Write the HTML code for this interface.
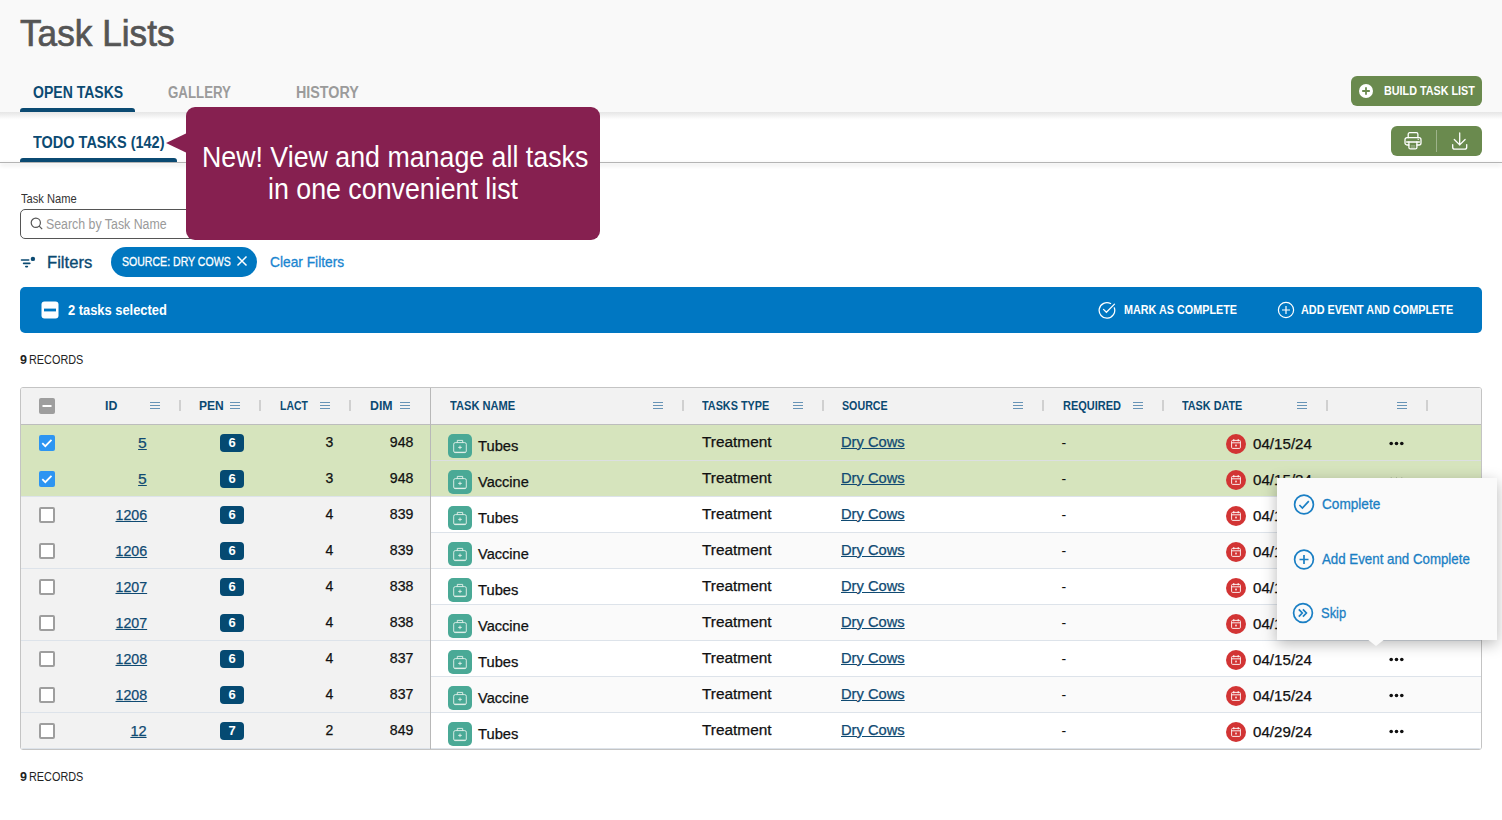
<!DOCTYPE html>
<html><head><meta charset="utf-8"><title>Task Lists</title>
<style>
html,body{margin:0;padding:0;}
body{width:1502px;height:820px;position:relative;overflow:hidden;background:#fff;font-family:"Liberation Sans",sans-serif;}
.t{position:absolute;white-space:nowrap;line-height:1;z-index:3;}
.a{position:absolute;}
#hdr{position:absolute;left:0;top:0;width:1502px;height:112px;background:#f9f9f9;}
#bar2{position:absolute;left:0;top:112px;width:1502px;height:50px;background:linear-gradient(#e6e6e6 0px,#efefef 3px,#fafafa 6px,#fff 8px);}
#bar2sh{position:absolute;left:0;top:162px;width:1502px;height:1px;background:#b4b4b4;box-shadow:0 2px 4px rgba(0,0,0,.22);}
.uline{position:absolute;height:4px;background:#0b4a72;border-radius:3px 3px 0 0;}
.gbtn{position:absolute;background:#6a8a4e;border-radius:6px;}
#tip{position:absolute;left:186px;top:107px;width:414px;height:133px;background:#862050;border-radius:9px;z-index:10;}
#tiparrow{position:absolute;left:166px;top:133px;width:0;height:0;border-top:10px solid transparent;border-bottom:10px solid transparent;border-right:21px solid #862050;z-index:10;}
#tiptext{position:absolute;left:186px;top:141px;width:414px;text-align:center;color:#fff;font-size:29px;line-height:32px;z-index:11;transform:scaleX(0.923);transform-origin:207px 0;white-space:nowrap;}
#search{position:absolute;left:20px;top:209px;width:400px;height:28px;border:1px solid #555;border-radius:5px;background:#fff;}
#chip{position:absolute;left:111px;top:247px;width:146px;height:30px;background:#0077c0;border-radius:15px;}
#banner{position:absolute;left:20px;top:287px;width:1462px;height:46px;background:#0077c2;border-radius:5px;}
#table{position:absolute;left:20px;top:387px;width:1460px;height:361px;border:1px solid #c4c4c4;border-radius:3px;background:#fff;overflow:hidden;}
#thead{position:absolute;left:0;top:0;width:1460px;height:36px;background:#f2f2f2;border-bottom:1px solid #bdbdbd;}
.row{position:absolute;left:0;width:1460px;height:36px;}
.pin{position:absolute;left:0;width:410px;height:36px;background:#f2f2f2;}
.rb{position:absolute;left:0;width:1460px;height:1px;background:#dde3ea;}
.cb{position:absolute;left:19px;width:12px;height:12px;border:2px solid #9e9e9e;border-radius:2px;background:#fff;}
.cbc{position:absolute;left:19px;width:16px;height:16px;border-radius:2px;background:#2d95f2;}
.pen{position:absolute;left:199px;width:24px;height:18px;background:#054a72;border-radius:4px;}
.ticon{position:absolute;left:428px;width:24px;height:24px;background:#4aa996;border-radius:5px;}
.cal{position:absolute;left:1206px;width:20px;height:20px;background:#d23434;border-radius:50%;}
.dots{position:absolute;left:1370px;width:14px;height:4px;}
.menu{position:absolute;width:10px;height:7px;}
.sep{position:absolute;width:2px;height:11px;background:#d0d0d0;top:12px;}
#popup{position:absolute;left:1277px;top:478px;width:220px;height:162px;background:#fafafa;box-shadow:0 4px 14px rgba(0,0,0,.28);z-index:8;}
#popupArrow{position:absolute;left:1367px;top:639px;width:0;height:0;border-left:9px solid transparent;border-right:9px solid transparent;border-top:7px solid #fafafa;z-index:8;}
.popi{position:absolute;z-index:9;}
#popup ~ .t{z-index:3;}

</style></head><body>
<div id="hdr"></div>
<div class="uline" style="left:20px;top:108px;width:115px;z-index:4;"></div>
<div id="bar2"></div><div id="bar2sh"></div>
<div class="uline" style="left:20px;top:158px;width:157px;z-index:4;"></div>
<div class="gbtn" style="left:1351px;top:76px;width:131px;height:30px;"></div>
<svg class="a" style="left:1358px;top:83px;z-index:4" width="16" height="16" viewBox="0 0 16 16"><circle cx="8" cy="8" r="7" fill="#fff"/><path d="M8 4.2v7.6M4.2 8h7.6" stroke="#6a8a4e" stroke-width="1.8"/></svg>
<div class="gbtn" style="left:1391px;top:126px;width:91px;height:30px;"></div>
<div class="a" style="left:1436px;top:130px;width:1px;height:22px;background:rgba(255,255,255,.35);z-index:4"></div>
<svg class="a" style="left:1403px;top:132px;z-index:4" width="20" height="19" viewBox="0 0 20 19" fill="none" stroke="#fff" stroke-width="1.3" stroke-linecap="round" stroke-linejoin="round"><path d="M5.2 5.7V2.2a1.5 1.5 0 0 1 1.5-1.5h6.7a1.5 1.5 0 0 1 1.5 1.5v3.5"/><path d="M5.9 13H4a2 2 0 0 1-2-2V7.7a2 2 0 0 1 2-2h12a2 2 0 0 1 2 2V11a2 2 0 0 1-2 2h-2.1"/><path d="M3.6 10h12.8"/><path d="M5.9 10v5.4a1.5 1.5 0 0 0 1.5 1.5h5a1.5 1.5 0 0 0 1.5-1.5V10"/><path d="M8.2 13.8h3.6M8.2 15.2h3.6" stroke-width=".6" opacity=".6"/><circle cx="15.2" cy="7.4" r=".55" fill="#fff" stroke="none"/></svg>
<svg class="a" style="left:1451px;top:132px;z-index:4" width="18" height="19" viewBox="0 0 18 19" fill="none" stroke="#fff" stroke-width="1.3" stroke-linecap="round" stroke-linejoin="round"><path d="M8.7 1v12M3.3 7.5l5.4 5.4 5.4-5.4"/><path d="M1.7 12.6v2.6a2 2 0 0 0 2 2h10a2 2 0 0 0 2-2v-2.6"/></svg>
<div id="tip"></div><div id="tiparrow"></div>
<div id="tiptext">New! View and manage all tasks<br>in one convenient list</div>
<div id="search"></div>
<svg class="a" style="left:30px;top:217px;z-index:4" width="13" height="13" viewBox="0 0 13 13" fill="none" stroke="#555" stroke-width="1.2"><circle cx="5.8" cy="5.8" r="4.6"/><path d="M9.2 9.2l3 3"/></svg>
<svg class="a" style="left:20px;top:255px;z-index:4" width="16" height="14" viewBox="0 0 16 14" fill="none" stroke="#0b4a72" stroke-width="1.6" stroke-linecap="round"><path d="M1.5 5h7.2M3.6 8.4h6.2M5.8 11.6h1.6"/><circle cx="12.9" cy="3.9" r="2.2" fill="#0b4a72" stroke="none"/></svg>
<div id="chip"></div>
<svg class="a" style="left:236px;top:255px;z-index:4" width="12" height="12" viewBox="0 0 12 12" stroke="#fff" stroke-width="1.5"><path d="M1.5 1.5l9 9M10.5 1.5l-9 9"/></svg>
<div id="banner"></div>
<svg class="a" style="left:41px;top:301px;z-index:4" width="18" height="18" viewBox="0 0 18 18"><rect x="0.5" y="0.5" width="17" height="17" rx="3" fill="#fff"/><rect x="3" y="7.6" width="12" height="2.8" fill="#0077c2"/></svg>
<svg class="a" style="left:1098px;top:301px;z-index:4" width="19" height="18" viewBox="0 0 19 18" fill="none" stroke="#fff" stroke-width="1.25" stroke-linecap="round"><path d="M12.6 2.5A7.8 7.8 0 1 0 16.3 6.8"/><path d="M5.5 8.4l2.9 2.9 8.1-8.2"/></svg>
<svg class="a" style="left:1277px;top:301px;z-index:4" width="18" height="18" viewBox="0 0 18 18" fill="none" stroke="#fff" stroke-width="1.2"><circle cx="9" cy="9" r="7.6"/><path d="M9 5v8M5 9h8"/></svg>
<div id="table">
<div id="thead"></div>
<svg class="a" style="left:18px;top:10px" width="16" height="16" viewBox="0 0 16 16"><rect width="16" height="16" rx="2" fill="#9e9e9e"/><rect x="3.5" y="7" width="9" height="2" fill="#fff"/></svg>
<svg class="menu" style="left:129px;top:14px" width="10" height="7" viewBox="0 0 10 7" stroke="#6794b6" stroke-width="1"><path d="M0 .5h10M0 3.5h10M0 6.5h10"/></svg>
<svg class="menu" style="left:209px;top:14px" width="10" height="7" viewBox="0 0 10 7" stroke="#6794b6" stroke-width="1"><path d="M0 .5h10M0 3.5h10M0 6.5h10"/></svg>
<svg class="menu" style="left:299px;top:14px" width="10" height="7" viewBox="0 0 10 7" stroke="#6794b6" stroke-width="1"><path d="M0 .5h10M0 3.5h10M0 6.5h10"/></svg>
<svg class="menu" style="left:379px;top:14px" width="10" height="7" viewBox="0 0 10 7" stroke="#6794b6" stroke-width="1"><path d="M0 .5h10M0 3.5h10M0 6.5h10"/></svg>
<svg class="menu" style="left:632px;top:14px" width="10" height="7" viewBox="0 0 10 7" stroke="#6794b6" stroke-width="1"><path d="M0 .5h10M0 3.5h10M0 6.5h10"/></svg>
<svg class="menu" style="left:772px;top:14px" width="10" height="7" viewBox="0 0 10 7" stroke="#6794b6" stroke-width="1"><path d="M0 .5h10M0 3.5h10M0 6.5h10"/></svg>
<svg class="menu" style="left:992px;top:14px" width="10" height="7" viewBox="0 0 10 7" stroke="#6794b6" stroke-width="1"><path d="M0 .5h10M0 3.5h10M0 6.5h10"/></svg>
<svg class="menu" style="left:1112px;top:14px" width="10" height="7" viewBox="0 0 10 7" stroke="#6794b6" stroke-width="1"><path d="M0 .5h10M0 3.5h10M0 6.5h10"/></svg>
<svg class="menu" style="left:1276px;top:14px" width="10" height="7" viewBox="0 0 10 7" stroke="#6794b6" stroke-width="1"><path d="M0 .5h10M0 3.5h10M0 6.5h10"/></svg>
<svg class="menu" style="left:1376px;top:14px" width="10" height="7" viewBox="0 0 10 7" stroke="#6794b6" stroke-width="1"><path d="M0 .5h10M0 3.5h10M0 6.5h10"/></svg>
<div class="sep" style="left:158px"></div>
<div class="sep" style="left:238px"></div>
<div class="sep" style="left:328px"></div>
<div class="sep" style="left:661px"></div>
<div class="sep" style="left:801px"></div>
<div class="sep" style="left:1021px"></div>
<div class="sep" style="left:1141px"></div>
<div class="sep" style="left:1305px"></div>
<div class="sep" style="left:1405px"></div>
<div class="a" style="left:409px;top:0;width:1px;height:361px;background:#b8b8b8;z-index:2"></div>
<div class="row" style="top:37px;background:#d6e4bd"></div>
<svg class="a" style="left:18px;top:47px" width="16" height="16" viewBox="0 0 16 16"><rect width="16" height="16" rx="2" fill="#2d95f2"/><path d="M3.3 8.2l3 3 6.2-6.4" fill="none" stroke="#fff" stroke-width="1.8"/></svg>
<div class="pen" style="top:46px"></div>
<svg class="a" style="left:427px;top:46px" width="24" height="24" viewBox="0 0 24 24"><rect width="24" height="24" rx="5" fill="#4aa996"/><g fill="none" stroke="#e6f2ec" stroke-width="0.9"><rect x="5.7" y="8.6" width="12.6" height="10" rx="1.6"/><path d="M9.3 8.6V6.4h5.4v2.2"/><path d="M12 11.6v3.6M10.2 13.4h3.6"/><path d="M6.6 18.2h10.8" stroke-width="1.1"/></g></svg>
<svg class="a" style="left:1205px;top:46px" width="20" height="20" viewBox="0 0 20 20"><circle cx="10" cy="10" r="10" fill="#d23434"/><g fill="none" stroke="#fff" stroke-width="0.9"><rect x="5.6" y="6.4" width="8.8" height="8" rx="1"/><path d="M5.6 8.8h8.8M7.8 5v2.4M12.2 5v2.4"/></g><rect x="9.3" y="10.6" width="1.4" height="1.8" fill="#fff"/></svg>
<svg class="a" style="left:1368px;top:53px" width="15" height="5" viewBox="0 0 15 5" fill="#111"><circle cx="2.2" cy="2.5" r="1.8"/><circle cx="7.5" cy="2.5" r="1.8"/><circle cx="12.8" cy="2.5" r="1.8"/></svg>
<div class="row" style="top:73px;background:#d6e4bd"></div>
<div class="rb" style="top:72px;left:410px;width:1050px;background:#dcdfe2"></div>
<svg class="a" style="left:18px;top:83px" width="16" height="16" viewBox="0 0 16 16"><rect width="16" height="16" rx="2" fill="#2d95f2"/><path d="M3.3 8.2l3 3 6.2-6.4" fill="none" stroke="#fff" stroke-width="1.8"/></svg>
<div class="pen" style="top:82px"></div>
<svg class="a" style="left:427px;top:82px" width="24" height="24" viewBox="0 0 24 24"><rect width="24" height="24" rx="5" fill="#4aa996"/><g fill="none" stroke="#e6f2ec" stroke-width="0.9"><rect x="5.7" y="8.6" width="12.6" height="10" rx="1.6"/><path d="M9.3 8.6V6.4h5.4v2.2"/><path d="M12 11.6v3.6M10.2 13.4h3.6"/><path d="M6.6 18.2h10.8" stroke-width="1.1"/></g></svg>
<svg class="a" style="left:1205px;top:82px" width="20" height="20" viewBox="0 0 20 20"><circle cx="10" cy="10" r="10" fill="#d23434"/><g fill="none" stroke="#fff" stroke-width="0.9"><rect x="5.6" y="6.4" width="8.8" height="8" rx="1"/><path d="M5.6 8.8h8.8M7.8 5v2.4M12.2 5v2.4"/></g><rect x="9.3" y="10.6" width="1.4" height="1.8" fill="#fff"/></svg>
<svg class="a" style="left:1368px;top:89px" width="15" height="5" viewBox="0 0 15 5" fill="#111"><circle cx="2.2" cy="2.5" r="1.8"/><circle cx="7.5" cy="2.5" r="1.8"/><circle cx="12.8" cy="2.5" r="1.8"/></svg>
<div class="row" style="top:109px;background:#ffffff"></div>
<div class="pin" style="top:109px"></div>
<div class="rb" style="top:108px;left:410px;width:1050px;background:#dde3ea"></div>
<div class="rb" style="top:108px;width:410px;"></div>
<div class="cb" style="left:18px;top:119px"></div>
<div class="pen" style="top:118px"></div>
<svg class="a" style="left:427px;top:118px" width="24" height="24" viewBox="0 0 24 24"><rect width="24" height="24" rx="5" fill="#4aa996"/><g fill="none" stroke="#e6f2ec" stroke-width="0.9"><rect x="5.7" y="8.6" width="12.6" height="10" rx="1.6"/><path d="M9.3 8.6V6.4h5.4v2.2"/><path d="M12 11.6v3.6M10.2 13.4h3.6"/><path d="M6.6 18.2h10.8" stroke-width="1.1"/></g></svg>
<svg class="a" style="left:1205px;top:118px" width="20" height="20" viewBox="0 0 20 20"><circle cx="10" cy="10" r="10" fill="#d23434"/><g fill="none" stroke="#fff" stroke-width="0.9"><rect x="5.6" y="6.4" width="8.8" height="8" rx="1"/><path d="M5.6 8.8h8.8M7.8 5v2.4M12.2 5v2.4"/></g><rect x="9.3" y="10.6" width="1.4" height="1.8" fill="#fff"/></svg>
<svg class="a" style="left:1368px;top:125px" width="15" height="5" viewBox="0 0 15 5" fill="#111"><circle cx="2.2" cy="2.5" r="1.8"/><circle cx="7.5" cy="2.5" r="1.8"/><circle cx="12.8" cy="2.5" r="1.8"/></svg>
<div class="row" style="top:145px;background:#fafafa"></div>
<div class="pin" style="top:145px"></div>
<div class="rb" style="top:144px;left:410px;width:1050px;background:#dde3ea"></div>
<div class="cb" style="left:18px;top:155px"></div>
<div class="pen" style="top:154px"></div>
<svg class="a" style="left:427px;top:154px" width="24" height="24" viewBox="0 0 24 24"><rect width="24" height="24" rx="5" fill="#4aa996"/><g fill="none" stroke="#e6f2ec" stroke-width="0.9"><rect x="5.7" y="8.6" width="12.6" height="10" rx="1.6"/><path d="M9.3 8.6V6.4h5.4v2.2"/><path d="M12 11.6v3.6M10.2 13.4h3.6"/><path d="M6.6 18.2h10.8" stroke-width="1.1"/></g></svg>
<svg class="a" style="left:1205px;top:154px" width="20" height="20" viewBox="0 0 20 20"><circle cx="10" cy="10" r="10" fill="#d23434"/><g fill="none" stroke="#fff" stroke-width="0.9"><rect x="5.6" y="6.4" width="8.8" height="8" rx="1"/><path d="M5.6 8.8h8.8M7.8 5v2.4M12.2 5v2.4"/></g><rect x="9.3" y="10.6" width="1.4" height="1.8" fill="#fff"/></svg>
<svg class="a" style="left:1368px;top:161px" width="15" height="5" viewBox="0 0 15 5" fill="#111"><circle cx="2.2" cy="2.5" r="1.8"/><circle cx="7.5" cy="2.5" r="1.8"/><circle cx="12.8" cy="2.5" r="1.8"/></svg>
<div class="row" style="top:181px;background:#ffffff"></div>
<div class="pin" style="top:181px"></div>
<div class="rb" style="top:180px;left:410px;width:1050px;background:#dde3ea"></div>
<div class="rb" style="top:180px;width:410px;"></div>
<div class="cb" style="left:18px;top:191px"></div>
<div class="pen" style="top:190px"></div>
<svg class="a" style="left:427px;top:190px" width="24" height="24" viewBox="0 0 24 24"><rect width="24" height="24" rx="5" fill="#4aa996"/><g fill="none" stroke="#e6f2ec" stroke-width="0.9"><rect x="5.7" y="8.6" width="12.6" height="10" rx="1.6"/><path d="M9.3 8.6V6.4h5.4v2.2"/><path d="M12 11.6v3.6M10.2 13.4h3.6"/><path d="M6.6 18.2h10.8" stroke-width="1.1"/></g></svg>
<svg class="a" style="left:1205px;top:190px" width="20" height="20" viewBox="0 0 20 20"><circle cx="10" cy="10" r="10" fill="#d23434"/><g fill="none" stroke="#fff" stroke-width="0.9"><rect x="5.6" y="6.4" width="8.8" height="8" rx="1"/><path d="M5.6 8.8h8.8M7.8 5v2.4M12.2 5v2.4"/></g><rect x="9.3" y="10.6" width="1.4" height="1.8" fill="#fff"/></svg>
<svg class="a" style="left:1368px;top:197px" width="15" height="5" viewBox="0 0 15 5" fill="#111"><circle cx="2.2" cy="2.5" r="1.8"/><circle cx="7.5" cy="2.5" r="1.8"/><circle cx="12.8" cy="2.5" r="1.8"/></svg>
<div class="row" style="top:217px;background:#fafafa"></div>
<div class="pin" style="top:217px"></div>
<div class="rb" style="top:216px;left:410px;width:1050px;background:#dde3ea"></div>
<div class="cb" style="left:18px;top:227px"></div>
<div class="pen" style="top:226px"></div>
<svg class="a" style="left:427px;top:226px" width="24" height="24" viewBox="0 0 24 24"><rect width="24" height="24" rx="5" fill="#4aa996"/><g fill="none" stroke="#e6f2ec" stroke-width="0.9"><rect x="5.7" y="8.6" width="12.6" height="10" rx="1.6"/><path d="M9.3 8.6V6.4h5.4v2.2"/><path d="M12 11.6v3.6M10.2 13.4h3.6"/><path d="M6.6 18.2h10.8" stroke-width="1.1"/></g></svg>
<svg class="a" style="left:1205px;top:226px" width="20" height="20" viewBox="0 0 20 20"><circle cx="10" cy="10" r="10" fill="#d23434"/><g fill="none" stroke="#fff" stroke-width="0.9"><rect x="5.6" y="6.4" width="8.8" height="8" rx="1"/><path d="M5.6 8.8h8.8M7.8 5v2.4M12.2 5v2.4"/></g><rect x="9.3" y="10.6" width="1.4" height="1.8" fill="#fff"/></svg>
<svg class="a" style="left:1368px;top:233px" width="15" height="5" viewBox="0 0 15 5" fill="#111"><circle cx="2.2" cy="2.5" r="1.8"/><circle cx="7.5" cy="2.5" r="1.8"/><circle cx="12.8" cy="2.5" r="1.8"/></svg>
<div class="row" style="top:253px;background:#ffffff"></div>
<div class="pin" style="top:253px"></div>
<div class="rb" style="top:252px;left:410px;width:1050px;background:#dde3ea"></div>
<div class="rb" style="top:252px;width:410px;"></div>
<div class="cb" style="left:18px;top:263px"></div>
<div class="pen" style="top:262px"></div>
<svg class="a" style="left:427px;top:262px" width="24" height="24" viewBox="0 0 24 24"><rect width="24" height="24" rx="5" fill="#4aa996"/><g fill="none" stroke="#e6f2ec" stroke-width="0.9"><rect x="5.7" y="8.6" width="12.6" height="10" rx="1.6"/><path d="M9.3 8.6V6.4h5.4v2.2"/><path d="M12 11.6v3.6M10.2 13.4h3.6"/><path d="M6.6 18.2h10.8" stroke-width="1.1"/></g></svg>
<svg class="a" style="left:1205px;top:262px" width="20" height="20" viewBox="0 0 20 20"><circle cx="10" cy="10" r="10" fill="#d23434"/><g fill="none" stroke="#fff" stroke-width="0.9"><rect x="5.6" y="6.4" width="8.8" height="8" rx="1"/><path d="M5.6 8.8h8.8M7.8 5v2.4M12.2 5v2.4"/></g><rect x="9.3" y="10.6" width="1.4" height="1.8" fill="#fff"/></svg>
<svg class="a" style="left:1368px;top:269px" width="15" height="5" viewBox="0 0 15 5" fill="#111"><circle cx="2.2" cy="2.5" r="1.8"/><circle cx="7.5" cy="2.5" r="1.8"/><circle cx="12.8" cy="2.5" r="1.8"/></svg>
<div class="row" style="top:289px;background:#fafafa"></div>
<div class="pin" style="top:289px"></div>
<div class="rb" style="top:288px;left:410px;width:1050px;background:#dde3ea"></div>
<div class="cb" style="left:18px;top:299px"></div>
<div class="pen" style="top:298px"></div>
<svg class="a" style="left:427px;top:298px" width="24" height="24" viewBox="0 0 24 24"><rect width="24" height="24" rx="5" fill="#4aa996"/><g fill="none" stroke="#e6f2ec" stroke-width="0.9"><rect x="5.7" y="8.6" width="12.6" height="10" rx="1.6"/><path d="M9.3 8.6V6.4h5.4v2.2"/><path d="M12 11.6v3.6M10.2 13.4h3.6"/><path d="M6.6 18.2h10.8" stroke-width="1.1"/></g></svg>
<svg class="a" style="left:1205px;top:298px" width="20" height="20" viewBox="0 0 20 20"><circle cx="10" cy="10" r="10" fill="#d23434"/><g fill="none" stroke="#fff" stroke-width="0.9"><rect x="5.6" y="6.4" width="8.8" height="8" rx="1"/><path d="M5.6 8.8h8.8M7.8 5v2.4M12.2 5v2.4"/></g><rect x="9.3" y="10.6" width="1.4" height="1.8" fill="#fff"/></svg>
<svg class="a" style="left:1368px;top:305px" width="15" height="5" viewBox="0 0 15 5" fill="#111"><circle cx="2.2" cy="2.5" r="1.8"/><circle cx="7.5" cy="2.5" r="1.8"/><circle cx="12.8" cy="2.5" r="1.8"/></svg>
<div class="row" style="top:325px;background:#ffffff"></div>
<div class="pin" style="top:325px"></div>
<div class="rb" style="top:324px;left:410px;width:1050px;background:#dde3ea"></div>
<div class="rb" style="top:324px;width:410px;"></div>
<div class="cb" style="left:18px;top:335px"></div>
<div class="pen" style="top:334px"></div>
<svg class="a" style="left:427px;top:334px" width="24" height="24" viewBox="0 0 24 24"><rect width="24" height="24" rx="5" fill="#4aa996"/><g fill="none" stroke="#e6f2ec" stroke-width="0.9"><rect x="5.7" y="8.6" width="12.6" height="10" rx="1.6"/><path d="M9.3 8.6V6.4h5.4v2.2"/><path d="M12 11.6v3.6M10.2 13.4h3.6"/><path d="M6.6 18.2h10.8" stroke-width="1.1"/></g></svg>
<svg class="a" style="left:1205px;top:334px" width="20" height="20" viewBox="0 0 20 20"><circle cx="10" cy="10" r="10" fill="#d23434"/><g fill="none" stroke="#fff" stroke-width="0.9"><rect x="5.6" y="6.4" width="8.8" height="8" rx="1"/><path d="M5.6 8.8h8.8M7.8 5v2.4M12.2 5v2.4"/></g><rect x="9.3" y="10.6" width="1.4" height="1.8" fill="#fff"/></svg>
<svg class="a" style="left:1368px;top:341px" width="15" height="5" viewBox="0 0 15 5" fill="#111"><circle cx="2.2" cy="2.5" r="1.8"/><circle cx="7.5" cy="2.5" r="1.8"/><circle cx="12.8" cy="2.5" r="1.8"/></svg>
<div class="rb" style="top:360px;left:0;width:1460px;"></div>
</div>
<div id="popup"></div><div id="popupArrow"></div>
<svg class="popi" style="left:1293px;top:494px" width="22" height="22" viewBox="0 0 22 22" fill="none" stroke="#1a7fc4" stroke-width="1.7"><circle cx="11" cy="10.5" r="9.4"/><path d="M6.4 11l3 3 6.4-6.8"/></svg>
<svg class="popi" style="left:1293px;top:549px" width="22" height="22" viewBox="0 0 22 22" fill="none" stroke="#1a7fc4" stroke-width="1.7"><circle cx="11" cy="10.5" r="9.4"/><path d="M11 6v9M6.5 10.5h9"/></svg>
<svg class="popi" style="left:1292px;top:602px" width="22" height="22" viewBox="0 0 22 22" fill="none" stroke="#1a7fc4" stroke-width="1.7"><circle cx="11" cy="11" r="9.4"/><path d="M6.8 7.3l3.5 3.7-3.5 3.7M10.9 7.3l3.5 3.7-3.5 3.7"/></svg>
<span id="t0" class="t" style="left:20px;top:16.32px;font-size:36px;font-weight:400;color:#555555;transform:scaleX(0.9777);transform-origin:left;-webkit-text-stroke:0.7px #555;">Task Lists</span>
<span id="t1" class="t" style="left:33px;top:85.39px;font-size:15.6px;font-weight:700;color:#0b4a72;transform:scaleX(0.9000);transform-origin:left;">OPEN TASKS</span>
<span id="t2" class="t" style="left:168px;top:85.39px;font-size:15.6px;font-weight:700;color:#9b9b9b;transform:scaleX(0.8514);transform-origin:left;">GALLERY</span>
<span id="t3" class="t" style="left:296px;top:85.39px;font-size:15.6px;font-weight:700;color:#9b9b9b;transform:scaleX(0.9179);transform-origin:left;">HISTORY</span>
<span id="t4" class="t" style="left:1384.4px;top:85.12px;font-size:12.5px;font-weight:700;color:#ffffff;transform:scaleX(0.8629);transform-origin:left;">BUILD TASK LIST</span>
<span id="t5" class="t" style="left:33px;top:135.39px;font-size:15.6px;font-weight:700;color:#0b4a72;transform:scaleX(0.9291);transform-origin:left;">TODO TASKS (142)</span>
<span id="t6" class="t" style="left:21px;top:191.69px;font-size:13px;font-weight:400;color:#333333;transform:scaleX(0.8554);transform-origin:left;">Task Name</span>
<span id="t7" class="t" style="left:46px;top:216.65px;font-size:14px;font-weight:400;color:#9a9a9a;transform:scaleX(0.8824);transform-origin:left;">Search by Task Name</span>
<span id="t8" class="t" style="left:47.2px;top:253.61px;font-size:17px;font-weight:400;color:#0b4a72;transform:scaleX(0.9778);transform-origin:left;-webkit-text-stroke:0.35px #0b4a72;">Filters</span>
<span id="t9" class="t" style="left:122px;top:255.49px;font-size:13px;font-weight:400;color:#ffffff;transform:scaleX(0.8120);transform-origin:left;-webkit-text-stroke:0.3px #fff;">SOURCE: DRY COWS</span>
<span id="t10" class="t" style="left:270px;top:254.72px;font-size:14.5px;font-weight:400;color:#1a85d0;transform:scaleX(0.9487);transform-origin:left;-webkit-text-stroke:0.3px #1a85d0;">Clear Filters</span>
<span id="t11" class="t" style="left:68px;top:302.52px;font-size:14.5px;font-weight:700;color:#ffffff;transform:scaleX(0.8883);transform-origin:left;">2 tasks selected</span>
<span id="t12" class="t" style="left:1123.6px;top:302.99px;font-size:13px;font-weight:700;color:#ffffff;transform:scaleX(0.8309);transform-origin:left;">MARK AS COMPLETE</span>
<span id="t13" class="t" style="left:1301.3px;top:302.99px;font-size:13px;font-weight:700;color:#ffffff;transform:scaleX(0.8352);transform-origin:left;">ADD EVENT AND COMPLETE</span>
<span id="t14" class="t" style="left:20px;top:354.22px;font-size:12.5px;font-weight:700;color:#222222;">9</span>
<span id="t15" class="t" style="left:29px;top:354.22px;font-size:12.5px;font-weight:400;color:#222222;transform:scaleX(0.8689);transform-origin:left;">RECORDS</span>
<span id="t16" class="t" style="left:20px;top:771.42px;font-size:12.5px;font-weight:700;color:#222222;">9</span>
<span id="t17" class="t" style="left:29px;top:771.42px;font-size:12.5px;font-weight:400;color:#222222;transform:scaleX(0.8689);transform-origin:left;">RECORDS</span>
<span id="t18" class="t" style="left:104.6px;top:398.99px;font-size:13px;font-weight:700;color:#0b4a72;transform:scaleX(0.9500);transform-origin:left;">ID</span>
<span id="t19" class="t" style="left:199.2px;top:398.99px;font-size:13px;font-weight:700;color:#0b4a72;transform:scaleX(0.9240);transform-origin:left;">PEN</span>
<span id="t20" class="t" style="left:279.6px;top:398.99px;font-size:13px;font-weight:700;color:#0b4a72;transform:scaleX(0.8029);transform-origin:left;">LACT</span>
<span id="t21" class="t" style="left:369.5px;top:398.99px;font-size:13px;font-weight:700;color:#0b4a72;transform:scaleX(0.9478);transform-origin:left;">DIM</span>
<span id="t22" class="t" style="left:449.7px;top:398.99px;font-size:13px;font-weight:700;color:#0b4a72;transform:scaleX(0.8553);transform-origin:left;">TASK NAME</span>
<span id="t23" class="t" style="left:702.3px;top:398.99px;font-size:13px;font-weight:700;color:#0b4a72;transform:scaleX(0.8333);transform-origin:left;">TASKS TYPE</span>
<span id="t24" class="t" style="left:842px;top:398.99px;font-size:13px;font-weight:700;color:#0b4a72;transform:scaleX(0.8214);transform-origin:left;">SOURCE</span>
<span id="t25" class="t" style="left:1062.5px;top:398.99px;font-size:13px;font-weight:700;color:#0b4a72;transform:scaleX(0.8456);transform-origin:left;">REQUIRED</span>
<span id="t26" class="t" style="left:1182.3px;top:398.99px;font-size:13px;font-weight:700;color:#0b4a72;transform:scaleX(0.8315);transform-origin:left;">TASK DATE</span>
<span id="t27" class="t" style="right:1355px;top:435.65px;font-size:14px;font-weight:400;color:#104a72;transform:scaleX(1.1143);transform-origin:right;text-decoration:underline;text-underline-offset:1px;-webkit-text-stroke:0.25px currentColor;">5</span>
<span id="t28" class="t" style="left:32px;width:400px;text-align:center;top:436.49px;font-size:13px;font-weight:700;color:#ffffff;">6</span>
<span id="t29" class="t" style="right:1168.6px;top:434.85px;font-size:14px;font-weight:400;color:#111111;-webkit-text-stroke:0.25px currentColor;">3</span>
<span id="t30" class="t" style="right:1088.7px;top:434.85px;font-size:14px;font-weight:400;color:#111111;transform:scaleX(1.0087);transform-origin:right;-webkit-text-stroke:0.25px currentColor;">948</span>
<span id="t31" class="t" style="left:478px;top:439.05px;font-size:14px;font-weight:400;color:#111111;transform:scaleX(1.0526);transform-origin:left;-webkit-text-stroke:0.25px currentColor;">Tubes</span>
<span id="t32" class="t" style="left:701.5px;top:434.65px;font-size:14px;font-weight:400;color:#111111;transform:scaleX(1.0984);transform-origin:left;-webkit-text-stroke:0.25px currentColor;">Treatment</span>
<span id="t33" class="t" style="left:841px;top:434.65px;font-size:14px;font-weight:400;color:#104a72;transform:scaleX(1.0500);transform-origin:left;text-decoration:underline;text-underline-offset:1px;-webkit-text-stroke:0.25px currentColor;">Dry Cows</span>
<span id="t34" class="t" style="left:1061.5px;top:435.65px;font-size:14px;font-weight:400;color:#111111;">-</span>
<span id="t35" class="t" style="left:1252.6px;top:437.15px;font-size:14px;font-weight:400;color:#111111;transform:scaleX(1.0815);transform-origin:left;-webkit-text-stroke:0.25px currentColor;">04/15/24</span>
<span id="t36" class="t" style="right:1355px;top:471.65px;font-size:14px;font-weight:400;color:#104a72;transform:scaleX(1.1143);transform-origin:right;text-decoration:underline;text-underline-offset:1px;-webkit-text-stroke:0.25px currentColor;">5</span>
<span id="t37" class="t" style="left:32px;width:400px;text-align:center;top:472.49px;font-size:13px;font-weight:700;color:#ffffff;">6</span>
<span id="t38" class="t" style="right:1168.6px;top:470.85px;font-size:14px;font-weight:400;color:#111111;-webkit-text-stroke:0.25px currentColor;">3</span>
<span id="t39" class="t" style="right:1088.7px;top:470.85px;font-size:14px;font-weight:400;color:#111111;transform:scaleX(1.0087);transform-origin:right;-webkit-text-stroke:0.25px currentColor;">948</span>
<span id="t40" class="t" style="left:478px;top:475.05px;font-size:14px;font-weight:400;color:#111111;transform:scaleX(1.0408);transform-origin:left;-webkit-text-stroke:0.25px currentColor;">Vaccine</span>
<span id="t41" class="t" style="left:701.5px;top:470.65px;font-size:14px;font-weight:400;color:#111111;transform:scaleX(1.0984);transform-origin:left;-webkit-text-stroke:0.25px currentColor;">Treatment</span>
<span id="t42" class="t" style="left:841px;top:470.65px;font-size:14px;font-weight:400;color:#104a72;transform:scaleX(1.0500);transform-origin:left;text-decoration:underline;text-underline-offset:1px;-webkit-text-stroke:0.25px currentColor;">Dry Cows</span>
<span id="t43" class="t" style="left:1061.5px;top:471.65px;font-size:14px;font-weight:400;color:#111111;">-</span>
<span id="t44" class="t" style="left:1252.6px;top:473.15px;font-size:14px;font-weight:400;color:#111111;transform:scaleX(1.0815);transform-origin:left;-webkit-text-stroke:0.25px currentColor;">04/15/24</span>
<span id="t45" class="t" style="right:1355px;top:507.65px;font-size:14px;font-weight:400;color:#104a72;transform:scaleX(1.0161);transform-origin:right;text-decoration:underline;text-underline-offset:1px;-webkit-text-stroke:0.25px currentColor;">1206</span>
<span id="t46" class="t" style="left:32px;width:400px;text-align:center;top:508.49px;font-size:13px;font-weight:700;color:#ffffff;">6</span>
<span id="t47" class="t" style="right:1168.6px;top:506.85px;font-size:14px;font-weight:400;color:#111111;-webkit-text-stroke:0.25px currentColor;">4</span>
<span id="t48" class="t" style="right:1088.7px;top:506.85px;font-size:14px;font-weight:400;color:#111111;transform:scaleX(1.0087);transform-origin:right;-webkit-text-stroke:0.25px currentColor;">839</span>
<span id="t49" class="t" style="left:478px;top:511.05px;font-size:14px;font-weight:400;color:#111111;transform:scaleX(1.0526);transform-origin:left;-webkit-text-stroke:0.25px currentColor;">Tubes</span>
<span id="t50" class="t" style="left:701.5px;top:506.65px;font-size:14px;font-weight:400;color:#111111;transform:scaleX(1.0984);transform-origin:left;-webkit-text-stroke:0.25px currentColor;">Treatment</span>
<span id="t51" class="t" style="left:841px;top:506.65px;font-size:14px;font-weight:400;color:#104a72;transform:scaleX(1.0500);transform-origin:left;text-decoration:underline;text-underline-offset:1px;-webkit-text-stroke:0.25px currentColor;">Dry Cows</span>
<span id="t52" class="t" style="left:1061.5px;top:507.65px;font-size:14px;font-weight:400;color:#111111;">-</span>
<span id="t53" class="t" style="left:1252.6px;top:509.15px;font-size:14px;font-weight:400;color:#111111;transform:scaleX(1.0815);transform-origin:left;-webkit-text-stroke:0.25px currentColor;">04/15/24</span>
<span id="t54" class="t" style="right:1355px;top:543.65px;font-size:14px;font-weight:400;color:#104a72;transform:scaleX(1.0161);transform-origin:right;text-decoration:underline;text-underline-offset:1px;-webkit-text-stroke:0.25px currentColor;">1206</span>
<span id="t55" class="t" style="left:32px;width:400px;text-align:center;top:544.49px;font-size:13px;font-weight:700;color:#ffffff;">6</span>
<span id="t56" class="t" style="right:1168.6px;top:542.85px;font-size:14px;font-weight:400;color:#111111;-webkit-text-stroke:0.25px currentColor;">4</span>
<span id="t57" class="t" style="right:1088.7px;top:542.85px;font-size:14px;font-weight:400;color:#111111;transform:scaleX(1.0087);transform-origin:right;-webkit-text-stroke:0.25px currentColor;">839</span>
<span id="t58" class="t" style="left:478px;top:547.05px;font-size:14px;font-weight:400;color:#111111;transform:scaleX(1.0408);transform-origin:left;-webkit-text-stroke:0.25px currentColor;">Vaccine</span>
<span id="t59" class="t" style="left:701.5px;top:542.65px;font-size:14px;font-weight:400;color:#111111;transform:scaleX(1.0984);transform-origin:left;-webkit-text-stroke:0.25px currentColor;">Treatment</span>
<span id="t60" class="t" style="left:841px;top:542.65px;font-size:14px;font-weight:400;color:#104a72;transform:scaleX(1.0500);transform-origin:left;text-decoration:underline;text-underline-offset:1px;-webkit-text-stroke:0.25px currentColor;">Dry Cows</span>
<span id="t61" class="t" style="left:1061.5px;top:543.65px;font-size:14px;font-weight:400;color:#111111;">-</span>
<span id="t62" class="t" style="left:1252.6px;top:545.15px;font-size:14px;font-weight:400;color:#111111;transform:scaleX(1.0815);transform-origin:left;-webkit-text-stroke:0.25px currentColor;">04/15/24</span>
<span id="t63" class="t" style="right:1355px;top:579.65px;font-size:14px;font-weight:400;color:#104a72;transform:scaleX(1.0161);transform-origin:right;text-decoration:underline;text-underline-offset:1px;-webkit-text-stroke:0.25px currentColor;">1207</span>
<span id="t64" class="t" style="left:32px;width:400px;text-align:center;top:580.49px;font-size:13px;font-weight:700;color:#ffffff;">6</span>
<span id="t65" class="t" style="right:1168.6px;top:578.85px;font-size:14px;font-weight:400;color:#111111;-webkit-text-stroke:0.25px currentColor;">4</span>
<span id="t66" class="t" style="right:1088.7px;top:578.85px;font-size:14px;font-weight:400;color:#111111;transform:scaleX(1.0087);transform-origin:right;-webkit-text-stroke:0.25px currentColor;">838</span>
<span id="t67" class="t" style="left:478px;top:583.05px;font-size:14px;font-weight:400;color:#111111;transform:scaleX(1.0526);transform-origin:left;-webkit-text-stroke:0.25px currentColor;">Tubes</span>
<span id="t68" class="t" style="left:701.5px;top:578.65px;font-size:14px;font-weight:400;color:#111111;transform:scaleX(1.0984);transform-origin:left;-webkit-text-stroke:0.25px currentColor;">Treatment</span>
<span id="t69" class="t" style="left:841px;top:578.65px;font-size:14px;font-weight:400;color:#104a72;transform:scaleX(1.0500);transform-origin:left;text-decoration:underline;text-underline-offset:1px;-webkit-text-stroke:0.25px currentColor;">Dry Cows</span>
<span id="t70" class="t" style="left:1061.5px;top:579.65px;font-size:14px;font-weight:400;color:#111111;">-</span>
<span id="t71" class="t" style="left:1252.6px;top:581.15px;font-size:14px;font-weight:400;color:#111111;transform:scaleX(1.0815);transform-origin:left;-webkit-text-stroke:0.25px currentColor;">04/15/24</span>
<span id="t72" class="t" style="right:1355px;top:615.65px;font-size:14px;font-weight:400;color:#104a72;transform:scaleX(1.0161);transform-origin:right;text-decoration:underline;text-underline-offset:1px;-webkit-text-stroke:0.25px currentColor;">1207</span>
<span id="t73" class="t" style="left:32px;width:400px;text-align:center;top:616.49px;font-size:13px;font-weight:700;color:#ffffff;">6</span>
<span id="t74" class="t" style="right:1168.6px;top:614.85px;font-size:14px;font-weight:400;color:#111111;-webkit-text-stroke:0.25px currentColor;">4</span>
<span id="t75" class="t" style="right:1088.7px;top:614.85px;font-size:14px;font-weight:400;color:#111111;transform:scaleX(1.0087);transform-origin:right;-webkit-text-stroke:0.25px currentColor;">838</span>
<span id="t76" class="t" style="left:478px;top:619.05px;font-size:14px;font-weight:400;color:#111111;transform:scaleX(1.0408);transform-origin:left;-webkit-text-stroke:0.25px currentColor;">Vaccine</span>
<span id="t77" class="t" style="left:701.5px;top:614.65px;font-size:14px;font-weight:400;color:#111111;transform:scaleX(1.0984);transform-origin:left;-webkit-text-stroke:0.25px currentColor;">Treatment</span>
<span id="t78" class="t" style="left:841px;top:614.65px;font-size:14px;font-weight:400;color:#104a72;transform:scaleX(1.0500);transform-origin:left;text-decoration:underline;text-underline-offset:1px;-webkit-text-stroke:0.25px currentColor;">Dry Cows</span>
<span id="t79" class="t" style="left:1061.5px;top:615.65px;font-size:14px;font-weight:400;color:#111111;">-</span>
<span id="t80" class="t" style="left:1252.6px;top:617.15px;font-size:14px;font-weight:400;color:#111111;transform:scaleX(1.0815);transform-origin:left;-webkit-text-stroke:0.25px currentColor;">04/15/24</span>
<span id="t81" class="t" style="right:1355px;top:651.65px;font-size:14px;font-weight:400;color:#104a72;transform:scaleX(1.0161);transform-origin:right;text-decoration:underline;text-underline-offset:1px;-webkit-text-stroke:0.25px currentColor;">1208</span>
<span id="t82" class="t" style="left:32px;width:400px;text-align:center;top:652.49px;font-size:13px;font-weight:700;color:#ffffff;">6</span>
<span id="t83" class="t" style="right:1168.6px;top:650.85px;font-size:14px;font-weight:400;color:#111111;-webkit-text-stroke:0.25px currentColor;">4</span>
<span id="t84" class="t" style="right:1088.7px;top:650.85px;font-size:14px;font-weight:400;color:#111111;transform:scaleX(1.0087);transform-origin:right;-webkit-text-stroke:0.25px currentColor;">837</span>
<span id="t85" class="t" style="left:478px;top:655.05px;font-size:14px;font-weight:400;color:#111111;transform:scaleX(1.0526);transform-origin:left;-webkit-text-stroke:0.25px currentColor;">Tubes</span>
<span id="t86" class="t" style="left:701.5px;top:650.65px;font-size:14px;font-weight:400;color:#111111;transform:scaleX(1.0984);transform-origin:left;-webkit-text-stroke:0.25px currentColor;">Treatment</span>
<span id="t87" class="t" style="left:841px;top:650.65px;font-size:14px;font-weight:400;color:#104a72;transform:scaleX(1.0500);transform-origin:left;text-decoration:underline;text-underline-offset:1px;-webkit-text-stroke:0.25px currentColor;">Dry Cows</span>
<span id="t88" class="t" style="left:1061.5px;top:651.65px;font-size:14px;font-weight:400;color:#111111;">-</span>
<span id="t89" class="t" style="left:1252.6px;top:653.15px;font-size:14px;font-weight:400;color:#111111;transform:scaleX(1.0815);transform-origin:left;-webkit-text-stroke:0.25px currentColor;">04/15/24</span>
<span id="t90" class="t" style="right:1355px;top:687.65px;font-size:14px;font-weight:400;color:#104a72;transform:scaleX(1.0161);transform-origin:right;text-decoration:underline;text-underline-offset:1px;-webkit-text-stroke:0.25px currentColor;">1208</span>
<span id="t91" class="t" style="left:32px;width:400px;text-align:center;top:688.49px;font-size:13px;font-weight:700;color:#ffffff;">6</span>
<span id="t92" class="t" style="right:1168.6px;top:686.85px;font-size:14px;font-weight:400;color:#111111;-webkit-text-stroke:0.25px currentColor;">4</span>
<span id="t93" class="t" style="right:1088.7px;top:686.85px;font-size:14px;font-weight:400;color:#111111;transform:scaleX(1.0087);transform-origin:right;-webkit-text-stroke:0.25px currentColor;">837</span>
<span id="t94" class="t" style="left:478px;top:691.05px;font-size:14px;font-weight:400;color:#111111;transform:scaleX(1.0408);transform-origin:left;-webkit-text-stroke:0.25px currentColor;">Vaccine</span>
<span id="t95" class="t" style="left:701.5px;top:686.65px;font-size:14px;font-weight:400;color:#111111;transform:scaleX(1.0984);transform-origin:left;-webkit-text-stroke:0.25px currentColor;">Treatment</span>
<span id="t96" class="t" style="left:841px;top:686.65px;font-size:14px;font-weight:400;color:#104a72;transform:scaleX(1.0500);transform-origin:left;text-decoration:underline;text-underline-offset:1px;-webkit-text-stroke:0.25px currentColor;">Dry Cows</span>
<span id="t97" class="t" style="left:1061.5px;top:687.65px;font-size:14px;font-weight:400;color:#111111;">-</span>
<span id="t98" class="t" style="left:1252.6px;top:689.15px;font-size:14px;font-weight:400;color:#111111;transform:scaleX(1.0815);transform-origin:left;-webkit-text-stroke:0.25px currentColor;">04/15/24</span>
<span id="t99" class="t" style="right:1355px;top:723.65px;font-size:14px;font-weight:400;color:#104a72;transform:scaleX(1.0400);transform-origin:right;text-decoration:underline;text-underline-offset:1px;-webkit-text-stroke:0.25px currentColor;">12</span>
<span id="t100" class="t" style="left:32px;width:400px;text-align:center;top:724.49px;font-size:13px;font-weight:700;color:#ffffff;">7</span>
<span id="t101" class="t" style="right:1168.6px;top:722.85px;font-size:14px;font-weight:400;color:#111111;-webkit-text-stroke:0.25px currentColor;">2</span>
<span id="t102" class="t" style="right:1088.7px;top:722.85px;font-size:14px;font-weight:400;color:#111111;transform:scaleX(1.0087);transform-origin:right;-webkit-text-stroke:0.25px currentColor;">849</span>
<span id="t103" class="t" style="left:478px;top:727.05px;font-size:14px;font-weight:400;color:#111111;transform:scaleX(1.0526);transform-origin:left;-webkit-text-stroke:0.25px currentColor;">Tubes</span>
<span id="t104" class="t" style="left:701.5px;top:722.65px;font-size:14px;font-weight:400;color:#111111;transform:scaleX(1.0984);transform-origin:left;-webkit-text-stroke:0.25px currentColor;">Treatment</span>
<span id="t105" class="t" style="left:841px;top:722.65px;font-size:14px;font-weight:400;color:#104a72;transform:scaleX(1.0500);transform-origin:left;text-decoration:underline;text-underline-offset:1px;-webkit-text-stroke:0.25px currentColor;">Dry Cows</span>
<span id="t106" class="t" style="left:1061.5px;top:723.65px;font-size:14px;font-weight:400;color:#111111;">-</span>
<span id="t107" class="t" style="left:1252.6px;top:725.15px;font-size:14px;font-weight:400;color:#111111;transform:scaleX(1.0815);transform-origin:left;-webkit-text-stroke:0.25px currentColor;">04/29/24</span>
<span id="t108" class="t" style="left:1322.3px;top:497.12px;font-size:14.5px;font-weight:400;color:#1a7fc4;transform:scaleX(0.9393);transform-origin:left;z-index:9;-webkit-text-stroke:0.3px #1a7fc4;">Complete</span>
<span id="t109" class="t" style="left:1322.3px;top:552.22px;font-size:14.5px;font-weight:400;color:#1a7fc4;transform:scaleX(0.9168);transform-origin:left;z-index:9;-webkit-text-stroke:0.3px #1a7fc4;">Add Event and Complete</span>
<span id="t110" class="t" style="left:1320.6px;top:605.72px;font-size:14.5px;font-weight:400;color:#1a7fc4;transform:scaleX(0.8929);transform-origin:left;z-index:9;-webkit-text-stroke:0.3px #1a7fc4;">Skip</span>
</body></html>
